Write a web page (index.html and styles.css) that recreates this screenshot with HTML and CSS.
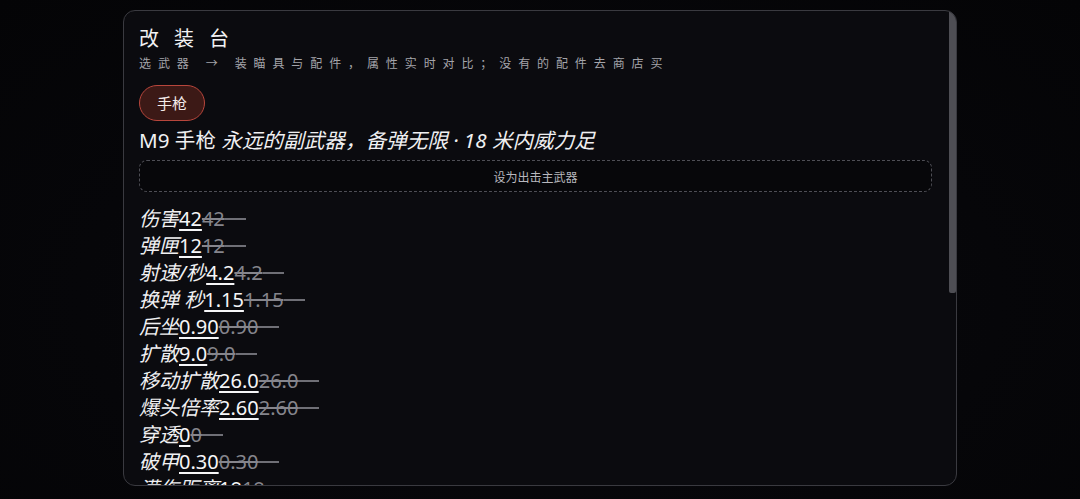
FILE: index.html
```html
<!DOCTYPE html>
<html lang="zh">
<head>
<meta charset="utf-8">
<title>改装台</title>
<link rel="stylesheet" href="styles.css">
</head>
<body>
<main class="panel">
  <div class="content">
    <h1 class="title">改装台</h1>
    <p class="sub">选武器 → 装瞄具与配件，属性实时对比；没有的配件去商店买</p>
    <div class="tabs"><button class="tab active">手枪</button></div>
    <p class="weapon">M9 手枪 <em>永远的副武器，备弹无限 · 18 米内威力足</em></p>
    <button class="equip">设为出击主武器</button>
    <ul class="stats">
      <li><em>伤害</em><ins>42</ins><del>42</del></li>
      <li><em>弹匣</em><ins>12</ins><del>12</del></li>
      <li><em>射速/秒</em><ins>4.2</ins><del>4.2</del></li>
      <li><em>换弹 秒</em><ins>1.15</ins><del>1.15</del></li>
      <li><em>后坐</em><ins>0.90</ins><del>0.90</del></li>
      <li><em>扩散</em><ins>9.0</ins><del>9.0</del></li>
      <li><em>移动扩散</em><ins>26.0</ins><del>26.0</del></li>
      <li><em>爆头倍率</em><ins>2.60</ins><del>2.60</del></li>
      <li><em>穿透</em><ins>0</ins><del>0</del></li>
      <li><em>破甲</em><ins>0.30</ins><del>0.30</del></li>
      <li><em>满伤距离</em><ins>18</ins><del>18</del></li>
    </ul>
  </div>
  <div class="thumb"></div>
</main>
</body>
</html>
```
FILE: styles.css
```css
html, body {
  margin: 0;
  padding: 0;
  height: 100%;
}
body {
  background: radial-gradient(ellipse at 50% 60%, #0a0a0e 0%, #060609 60%, #040406 100%);
  font-family: "Noto Sans", "Noto Sans CJK SC", sans-serif;
  color: #ececee;
  overflow: hidden;
  display: flex;
  justify-content: center;
  padding-top: 10px;
  box-sizing: border-box;
}
.panel {
  position: relative;
  width: 834px;
  height: 476px;
  box-sizing: border-box;
  border: 1px solid #3a3a40;
  border-radius: 12px;
  background: #0b0b0f;
  overflow: hidden;
}
.thumb {
  position: absolute;
  top: 0;
  right: 0;
  width: 7px;
  height: 282px;
  background: #4e4e54;
  border-radius: 0 0 2px 2px;
}
.content {
  padding: 14px 24px 0 15px;
}
.title {
  margin: 0;
  font-size: 20px;
  font-weight: 400;
  letter-spacing: 15px;
  line-height: 28px;
  color: #f2f2f4;
}
.sub {
  margin: 0;
  font-size: 12px;
  letter-spacing: 6.9px;
  line-height: 22px;
  color: #a4a4aa;
}
.tabs {
  margin-top: 10px;
  display: flex;
  gap: 8px;
}
.tab {
  font-family: inherit;
  font-size: 15px;
  color: #f3eaea;
  height: 36px;
  padding: 0 17px;
  border-radius: 18px;
  border: 1px solid #b8463c;
  background: #3c1916;
  line-height: 1;
}
.weapon {
  margin: 5px 0 0;
  font-size: 20.6px;
  line-height: 28px;
  color: #f0f0f2;
}
.weapon em { font-style: italic; }
.equip {
  display: block;
  width: 100%;
  margin-top: 6px;
  height: 32px;
  font-family: inherit;
  font-size: 12px;
  color: #b8b8be;
  background: #07070a;
  border: 1px dashed #4e4e55;
  border-radius: 8px;
  padding-top: 2px;
}
.stats {
  list-style: none;
  margin: 13px 0 0;
  padding: 0;
  font-size: 20px;
  line-height: 27px;
}
.stats li { white-space: nowrap; }
.stats em { font-style: italic; color: #f0f0f2; }
.stats ins {
  text-decoration: underline;
  text-underline-offset: 3px;
  color: #f6f6f8;
}
.stats del {
  color: #85858c;
  text-decoration: line-through;
  text-decoration-color: #85858c;
}
.stats del::after {
  content: "";
  display: inline-block;
  width: 21px;
  height: 2px;
  background: #6f6f76;
  vertical-align: 6px;
}
```
